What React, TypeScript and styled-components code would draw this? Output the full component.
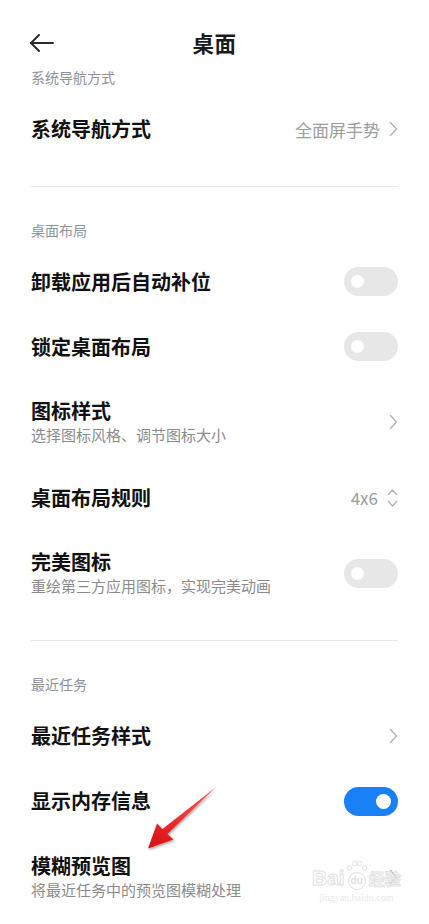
import React from "react";
import styled, { createGlobalStyle } from "styled-components";

const Global = createGlobalStyle`
  html, body { margin: 0; padding: 0; background: #ffffff; }
  body { font-family: "Noto Sans CJK SC", "Noto Sans", sans-serif; -webkit-font-smoothing: antialiased; }
`;

const Screen = styled.div`
  position: relative;
  width: 429px;
  height: 924px;
  overflow: hidden;
  background: #ffffff;
`;

const Header = styled.header`
  box-sizing: border-box;
  height: 67px;
  padding: 18px 0 0;
  display: grid;
  grid-template-columns: 1fr auto 1fr;
  align-items: center;
`;

const BackButton = styled.div`
  height: 48px;
  display: flex;
  align-items: center;
  padding-left: 29px;
`;

const Title = styled.h1`
  margin: 0;
  height: 48px;
  line-height: 48px;
  font-size: 21.5px;
  font-weight: 700;
  color: #1a1a1a;
  letter-spacing: 0.5px;
`;

const SectionLabel = styled.div<{ $top: number }>`
  padding: ${(p) => p.$top}px 31px 9.5px;
  font-size: 14px;
  line-height: 20px;
  color: #8d929b;
`;

const Row = styled.div<{ $tall?: boolean }>`
  box-sizing: border-box;
  height: ${(p) => (p.$tall ? 86 : 65)}px;
  padding: 0 31px;
  display: flex;
  align-items: center;
  justify-content: space-between;
`;

const TextCol = styled.div`
  display: flex;
  flex-direction: column;
`;

const RowTitle = styled.div`
  font-size: 20px;
  line-height: 26px;
  font-weight: 700;
  color: #111111;
`;

const RowSub = styled.div`
  font-size: 15px;
  line-height: 22px;
  color: #8b8b8b;
`;

const Trailing = styled.div`
  display: flex;
  align-items: center;
  gap: 9px;
`;

const Value = styled.span`
  font-size: 17px;
  color: #9d9d9d;
`;

const Divider = styled.div`
  height: 1px;
  margin: 24px 31px 0;
  background: #e8e8e8;
`;

const Track = styled.div<{ $on?: boolean }>`
  box-sizing: border-box;
  width: 54px;
  height: 29px;
  border-radius: 15px;
  padding: 0 7px;
  display: flex;
  align-items: center;
  justify-content: ${(p) => (p.$on ? "flex-end" : "flex-start")};
  background: ${(p) => (p.$on ? "#1a80f6" : "#e7e7e7")};
`;

const Knob = styled.div<{ $on?: boolean }>`
  width: ${(p) => (p.$on ? 15 : 13)}px;
  height: ${(p) => (p.$on ? 15 : 13)}px;
  border-radius: 50%;
  background: #ffffff;
`;

const ArrowOverlay = styled.svg`
  position: absolute;
  left: 138px;
  top: 778px;
  width: 90px;
  height: 80px;
  pointer-events: none;
`;

const Watermark = styled.div`
  position: absolute;
  left: 312px;
  top: 866px;
  display: flex;
  flex-direction: column;
  align-items: center;
  pointer-events: none;
`;

const WmMain = styled.div`
  font-family: "Liberation Sans", sans-serif;
  font-size: 21px;
  font-weight: 700;
  line-height: 24px;
  color: transparent;
  -webkit-text-stroke: 1px #e2e2e2;
  display: flex;
  align-items: flex-end;
  white-space: nowrap;
`;

const Paw = styled.div`
  position: relative;
  width: 22px;
  height: 24px;
  display: flex;
  align-items: flex-end;
  justify-content: center;
  margin: 0 1px;
`;

const PawText = styled.span`
  position: relative;
  font-family: "Liberation Sans", sans-serif;
  font-size: 10px;
  line-height: 12px;
  padding-bottom: 3px;
  color: #e2e2e2;
  -webkit-text-stroke: 0;
`;

const PawSvg = styled.svg`
  position: absolute;
  left: 0;
  top: -6px;
`;

const WmCn = styled.span`
  font-family: "Noto Sans CJK SC", sans-serif;
  font-size: 16px;
  line-height: 24px;
`;

const WmSub = styled.div`
  font-family: "Liberation Serif", serif;
  font-size: 10px;
  line-height: 12px;
  color: #e8e8e8;
  margin-top: 2px;
`;

const Chevron = () => (
  <svg width="9" height="16" viewBox="0 0 9 16">
    <polyline points="1.5,1.5 7.5,8 1.5,14.5" fill="none" stroke="#b4b4b4" strokeWidth="1.4" strokeLinecap="round" strokeLinejoin="round" />
  </svg>
);

const UpDown = () => (
  <svg width="11" height="22" viewBox="0 0 11 22">
    <polyline points="1.5,7.5 5.5,3 9.5,7.5" fill="none" stroke="#b4b4b4" strokeWidth="1.4" strokeLinecap="round" strokeLinejoin="round" />
    <polyline points="1.5,14.5 5.5,19 9.5,14.5" fill="none" stroke="#b4b4b4" strokeWidth="1.4" strokeLinecap="round" strokeLinejoin="round" />
  </svg>
);

const BackIcon = () => (
  <svg width="26" height="20" viewBox="0 0 26 20">
    <line x1="2" y1="10" x2="24" y2="10" stroke="#2b2b2b" strokeWidth="2" strokeLinecap="round" />
    <polyline points="10,2 2,10 10,18" fill="none" stroke="#2b2b2b" strokeWidth="2" strokeLinecap="round" strokeLinejoin="round" />
  </svg>
);

const Toggle = ({ on }: { on?: boolean }) => (
  <Track $on={on}>
    <Knob $on={on} />
  </Track>
);

type Item = {
  title: string;
  sub?: string;
  value?: string;
  trailing: "chevron" | "updown" | "off" | "on";
};

const SettingRow = ({ title, sub, value, trailing }: Item) => (
  <Row $tall={!!sub}>
    <TextCol>
      <RowTitle>{title}</RowTitle>
      {sub && <RowSub>{sub}</RowSub>}
    </TextCol>
    <Trailing>
      {value && <Value>{value}</Value>}
      {trailing === "chevron" && <Chevron />}
      {trailing === "updown" && <UpDown />}
      {trailing === "off" && <Toggle />}
      {trailing === "on" && <Toggle on />}
    </Trailing>
  </Row>
);

export default function App() {
  return (
    <Screen>
      <Global />
      <Header>
        <BackButton>
          <BackIcon />
        </BackButton>
        <Title>桌面</Title>
        <div />
      </Header>

      <SectionLabel $top={0}>系统导航方式</SectionLabel>
      <SettingRow title="系统导航方式" value="全面屏手势" trailing="chevron" />
      <Divider />

      <SectionLabel $top={33}>桌面布局</SectionLabel>
      <SettingRow title="卸载应用后自动补位" trailing="off" />
      <SettingRow title="锁定桌面布局" trailing="off" />
      <SettingRow title="图标样式" sub="选择图标风格、调节图标大小" trailing="chevron" />
      <SettingRow title="桌面布局规则" value="4x6" trailing="updown" />
      <SettingRow title="完美图标" sub="重绘第三方应用图标，实现完美动画" trailing="off" />
      <Divider />

      <SectionLabel $top={33}>最近任务</SectionLabel>
      <SettingRow title="最近任务样式" trailing="chevron" />
      <SettingRow title="显示内存信息" trailing="on" />
      <SettingRow title="模糊预览图" sub="将最近任务中的预览图模糊处理" trailing="chevron" />

      <Watermark>
        <WmMain>
          Bai
          <Paw>
            <PawSvg width="22" height="30" viewBox="0 0 22 30">
              <circle cx="11" cy="21" r="8.5" fill="none" stroke="#e2e2e2" strokeWidth="1" />
              <circle cx="3.5" cy="8" r="2.3" fill="none" stroke="#e2e2e2" strokeWidth="1" />
              <circle cx="8.5" cy="3.5" r="2.3" fill="none" stroke="#e2e2e2" strokeWidth="1" />
              <circle cx="13.5" cy="3.5" r="2.3" fill="none" stroke="#e2e2e2" strokeWidth="1" />
              <circle cx="18.5" cy="8" r="2.3" fill="none" stroke="#e2e2e2" strokeWidth="1" />
            </PawSvg>
            <PawText>du</PawText>
          </Paw>
          <WmCn>经验</WmCn>
        </WmMain>
        <WmSub>jingyan.baidu.com</WmSub>
      </Watermark>

      <ArrowOverlay viewBox="138 778 90 80">
        <defs>
          <linearGradient id="arrowGrad" x1="1" y1="0" x2="0" y2="1">
            <stop offset="0" stopColor="#ff5a5a" />
            <stop offset="1" stopColor="#d80d12" />
          </linearGradient>
          <filter id="arrowShadow" x="-20%" y="-20%" width="140%" height="140%">
            <feDropShadow dx="1" dy="1.5" stdDeviation="1.2" floodColor="#000" floodOpacity="0.35" />
          </filter>
        </defs>
        <polygon
          points="216,787 167.5,834 173.5,839.5 148,848.5 157,823.5 162.5,829 216,787"
          fill="url(#arrowGrad)"
          filter="url(#arrowShadow)"
        />
      </ArrowOverlay>
    </Screen>
  );
}
